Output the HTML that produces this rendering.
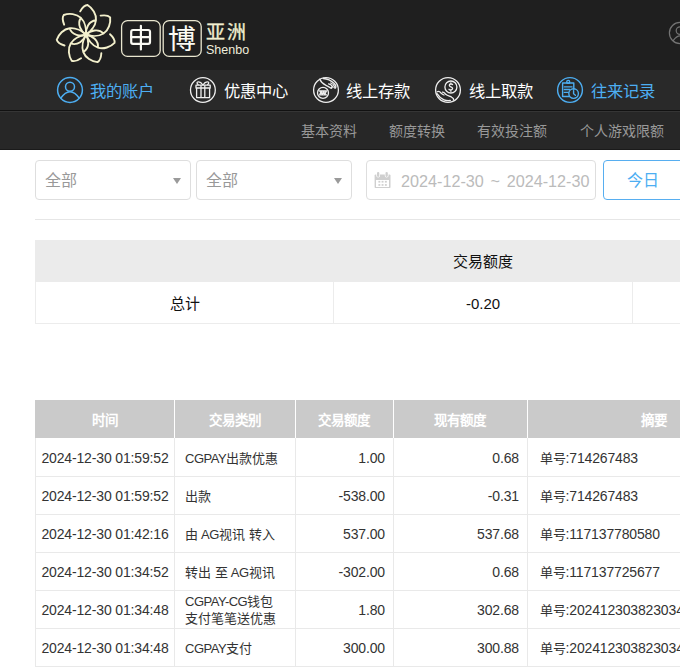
<!DOCTYPE html>
<html lang="zh-CN"><head><meta charset="utf-8"><style>
html,body{margin:0;padding:0;}
body{width:680px;height:672px;overflow:hidden;position:relative;background:#fff;font-family:"Liberation Sans", sans-serif;}
.abs{position:absolute;}
.nb{position:absolute;white-space:nowrap;}
.th{color:#fff;font-weight:bold;font-size:13.5px;padding-top:2px;box-sizing:border-box;text-align:center;white-space:nowrap;}
.ld{font-size:14px;letter-spacing:-0.15px;}
.tm .ld{letter-spacing:-0.15px;}
.lc{font-size:13px;letter-spacing:-0.5px;}
.td{font-size:13px;color:#333;display:flex;align-items:center;white-space:nowrap;line-height:17px;box-sizing:border-box;}
.tdc{justify-content:center;}
.tdl{justify-content:flex-start;padding-left:10px;}
.tdr{justify-content:flex-end;padding-right:8px;}
.c5{padding-left:11.5px;}
.nav{position:absolute;top:70.8px;height:40px;line-height:40px;font-size:16.3px;color:#fff;white-space:nowrap;}
.sub{position:absolute;top:113px;height:37px;line-height:37px;font-size:14px;color:#999;white-space:nowrap;}
.sel{position:absolute;top:160px;height:40px;box-sizing:border-box;border:1px solid #dedede;border-radius:4px;background:#fff;}
.seltxt{position:absolute;left:9px;top:1px;line-height:38px;font-size:16px;color:#999;white-space:nowrap;}
.tri{position:absolute;top:17px;width:0;height:0;border-left:4px solid transparent;border-right:4px solid transparent;border-top:6px solid #9a9a9a;}
</style></head><body>
<!-- header -->
<div class="abs" style="left:0;top:0;width:680px;height:70px;background:#1f1f1f"></div>
<svg class="abs" style="left:0;top:0" width="260" height="70"><g fill="none" stroke="#f3f0cc" stroke-width="1.9" stroke-linecap="round"><path d="M 80.21,11.37 C 82.42,7.48 85.55,5.14 87.55,5.04 C 92.41,8.00 96.59,14.23 95.97,20.20 C 95.46,26.18 90.15,31.91 86.00,34.70 M 86.00,34.70 C 85.32,28.66 88.73,20.82 95.97,20.20"/><path d="M 100.64,15.63 C 105.05,14.93 108.83,15.91 110.16,17.42 C 110.87,23.06 108.61,30.21 103.55,33.46 C 98.56,36.79 90.77,36.21 86.00,34.70 M 86.00,34.70 C 90.30,30.40 98.55,28.18 103.55,33.46"/><path d="M 110.04,34.25 C 113.34,37.27 114.92,40.84 114.57,42.82 C 110.61,46.89 103.61,49.58 97.92,47.65 C 92.20,45.82 87.79,39.37 86.00,34.70 M 86.00,34.70 C 92.04,35.38 98.92,40.45 97.92,47.65"/><path d="M 101.34,53.21 C 101.04,57.68 99.24,61.14 97.47,62.10 C 91.81,61.54 85.35,57.74 83.31,52.09 C 81.17,46.48 83.47,39.01 86.00,34.70 M 86.00,34.70 C 89.24,39.85 89.56,48.39 83.31,52.09"/><path d="M 81.09,58.23 C 77.41,60.78 73.58,61.53 71.73,60.75 C 68.64,55.98 67.58,48.55 70.72,43.44 C 73.78,38.27 81.05,35.41 86.00,34.70 M 86.00,34.70 C 83.99,40.44 77.52,46.02 70.72,43.44"/><path d="M 64.54,45.53 C 60.25,44.25 57.28,41.72 56.74,39.78 C 58.54,34.40 63.68,28.94 69.65,28.20 C 75.59,27.37 82.36,31.27 86.00,34.70 M 86.00,34.70 C 80.26,36.71 71.86,35.13 69.65,28.20"/><path d="M 64.15,24.68 C 62.48,20.52 62.60,16.62 63.78,14.99 C 69.12,13.04 76.59,13.66 80.88,17.86 C 85.24,21.99 86.41,29.72 86.00,34.70 M 86.00,34.70 C 80.85,31.47 76.85,23.91 80.88,17.86"/></g>
<rect x="121.6" y="20.6" width="38.6" height="35.8" rx="6" stroke="#e9e6cf" stroke-width="1.3" fill="none"/>
<rect x="163.2" y="20.6" width="38" height="35.8" rx="6" stroke="#e9e6cf" stroke-width="1.3" fill="none"/>
<g fill="none" stroke="#fbfbf4" stroke-width="2.2" stroke-linecap="round"><rect x="131.2" y="30" width="18.8" height="13.8" rx="1.8"/><path d="M131.2 37.1 H150 M140.9 25.8 V49.4"/></g>
</svg>
<div class="nb" style="left:168px;top:19.5px;font-size:27.8px;line-height:40px;color:#fbfbf4">博</div>
<div class="nb" style="left:205.5px;top:17.5px;font-size:19px;line-height:30px;color:#f1eecf;letter-spacing:2px;-webkit-text-stroke:0.3px #f1eecf">亚洲</div>
<div class="nb" style="left:206px;top:40.5px;font-size:12.5px;line-height:18px;color:#efeddc">Shenbo</div>
<svg class="abs" style="left:660px;top:14px" width="40" height="40"><g fill="none" stroke="#747474" stroke-width="1.2"><circle cx="20" cy="19" r="10.6"/><circle cx="20" cy="16.6" r="3.8"/><path d="M13 26.8 Q20 17 27 26.8"/></g></svg>
<!-- nav -->
<div class="abs" style="left:0;top:70px;width:680px;height:40px;background:#292929"></div>
<div class="abs" style="left:0;top:110px;width:680px;height:1px;background:#111"></div>
<div class="abs" style="left:0;top:111px;width:680px;height:1px;background:#353535"></div>
<svg class="abs" style="left:50px;top:70px" width="40" height="40"><g fill="none" stroke="#4daef2" stroke-width="1.5"><circle cx="20" cy="20" r="12.4"/><circle cx="20" cy="16.7" r="4.5"/><path d="M10.5 28.5 Q20 15 29.5 28.5"/></g></svg>
<div class="nav" style="left:90px;color:#4daef2">我的账户</div>
<svg class="abs" style="left:185px;top:70px" width="40" height="40"><g fill="none" stroke="#eee" stroke-width="1.3" stroke-linejoin="round"><circle cx="17.9" cy="20" r="12.4"/><rect x="11" y="15.2" width="14.2" height="2.8"/><path d="M11.6 18 V27.6 H24.6 V18"/><path d="M16 15.2 V27.6 M19.8 15.2 V27.6"/><path d="M17.9 15 C16.5 12.8 14 11.5 12.5 12 C11.5 12.6 12.2 14 13.5 15 M17.9 15 C19.3 12.8 21.8 11.5 23.3 12 C24.3 12.6 23.6 14 22.3 15"/></g></svg>
<div class="nav" style="left:224px">优惠中心</div>
<svg class="abs" style="left:306px;top:70px" width="40" height="40"><g fill="none" stroke="#eee" stroke-width="1.3" stroke-linecap="round" stroke-linejoin="round"><circle cx="20" cy="20" r="12.4"/><circle cx="17" cy="22.9" r="5.5"/><path d="M13.4 21 H20.6 M13.4 24.8 H20.6 M13.8 24.6 L15 21.2 L16.3 24.6 L17.6 21.2 L18.9 24.6 L20.2 21.2"/><path d="M13.8 9.2 C15 12 17 14 20 15.3 C22 16.2 23.5 17 25 18.2 C25.6 18.6 26.2 18 25.5 17.3"/><path d="M17.3 8.5 C21 8.8 25 10.5 28 13.2 C29.6 14.8 30.3 16.5 29.6 17.8 C29.2 18.4 28.5 18 28 17.4"/><path d="M22.6 13.8 C24.3 14 26 15.3 26.8 17.2 M24.8 13 C26.5 13.5 27.8 14.8 28.4 16.5"/></g></svg>
<div class="nav" style="left:346px">线上存款</div>
<svg class="abs" style="left:428px;top:70px" width="40" height="40"><g fill="none" stroke="#eee" stroke-width="1.3" stroke-linecap="round" stroke-linejoin="round"><circle cx="20" cy="20" r="12.4"/><circle cx="22.9" cy="17" r="6"/><path d="M24.6 14.6 C24 13.8 21.3 13.6 21.3 15.3 C21.3 17 24.6 16.6 24.6 18.6 C24.6 20.2 21.8 20.3 21 19.3 M22.9 12.8 V13.8 M22.9 20.4 V21.3"/><path d="M9.2 21.8 C10.5 21 12 21.8 13 23 C14 24 14.8 24.6 16 25"/><path d="M14.5 22.2 C15.8 22 17 23.5 18 24.6 C19.5 25.8 22 26.3 23.8 27.3 C25.2 28 25.8 29 25.6 29.8"/><path d="M9 23.6 C10.5 26 13 28.5 16 29.8 C18.2 30.7 20.6 30.8 22.3 30.5"/></g></svg>
<div class="nav" style="left:469px">线上取款</div>
<svg class="abs" style="left:550px;top:70px" width="40" height="40"><g fill="none" stroke="#4daef2" stroke-width="1.4" stroke-linecap="round" stroke-linejoin="round"><circle cx="20" cy="20" r="12.4"/><path d="M19.3 26.5 H12.6 V13 H23.8 V19.3"/><circle cx="18.2" cy="11.9" r="1.5"/><path d="M14.3 16.9 H22 M14.3 19.5 H19.6 M14.3 22.4 H18.2"/><circle cx="23.6" cy="23.6" r="4.8"/><path d="M23.6 20.6 V23.8 L25.4 25.2"/></g></svg>
<div class="nav" style="left:591px;color:#4daef2">往来记录</div>
<!-- subnav -->
<div class="abs" style="left:0;top:112px;width:680px;height:37px;background:#272727"></div>
<div class="abs" style="left:0;top:149px;width:680px;height:1px;background:#1a1a1a"></div>
<div class="sub" style="left:301px">基本资料</div>
<div class="sub" style="left:389px">额度转换</div>
<div class="sub" style="left:477px">有效投注额</div>
<div class="sub" style="left:580px">个人游戏限额</div>
<!-- filters -->
<div class="sel" style="left:35px;width:156px"><span class="seltxt">全部</span><div class="tri" style="left:137px"></div></div>
<div class="sel" style="left:196px;width:156px"><span class="seltxt">全部</span><div class="tri" style="left:137px"></div></div>
<div class="sel" style="left:366px;width:230px">
<svg class="abs" style="left:7px;top:11px" width="18" height="18"><rect x="0.6" y="2.4" width="15.9" height="13.7" rx="1.2" fill="#cfcfcf"/><rect x="2" y="8" width="13" height="7" fill="#fff"/><g fill="#cfcfcf"><rect x="4.4" y="8.9" width="1.9" height="1.7"/><rect x="7.6" y="8.9" width="1.9" height="1.7"/><rect x="10.9" y="8.9" width="1.9" height="1.7"/><rect x="4.4" y="12.1" width="1.9" height="1.7"/><rect x="7.6" y="12.1" width="1.9" height="1.7"/><rect x="10.9" y="12.1" width="1.9" height="1.7"/></g><g fill="#fff"><rect x="2.3" y="-1" width="3.7" height="6.6" rx="1.8"/><rect x="10.8" y="-1" width="3.7" height="6.6" rx="1.8"/></g><g fill="#cfcfcf"><rect x="3" y="0" width="2.3" height="4.9" rx="1.1"/><rect x="11.5" y="0" width="2.3" height="4.9" rx="1.1"/></g></svg>
<span class="seltxt" style="left:34px;top:1.4px;font-size:16.2px;color:#bbb;word-spacing:2.2px">2024-12-30 ~ 2024-12-30</span></div>
<div class="sel" style="left:603px;width:110px;border-color:#57aef0"><span class="seltxt" style="left:23px;font-size:16px;color:#4daef2">今日</span></div>
<div class="abs" style="left:35px;top:219px;width:645px;height:1px;background:#e6e6e6"></div>
<!-- summary -->
<div class="abs" style="left:35px;top:240px;width:700px;height:42px;background:#ebebeb"></div>
<div class="nb" style="left:333px;top:241px;width:299px;line-height:42px;text-align:center;font-size:15px;color:#111">交易额度</div>
<div class="abs" style="left:35px;top:282px;width:700px;height:42px;box-sizing:border-box;border-left:1px solid #ececec;border-bottom:1px solid #ececec"></div>
<div class="abs" style="left:333px;top:282px;width:1px;height:42px;background:#ececec"></div>
<div class="abs" style="left:632px;top:282px;width:1px;height:42px;background:#ececec"></div>
<div class="nb" style="left:36px;top:283px;width:297px;line-height:42px;text-align:center;font-size:15px;color:#111">总计</div>
<div class="nb" style="left:334px;top:282.5px;width:298px;line-height:42px;text-align:center;font-size:15px;color:#111">-0.20</div>
<!-- main table -->
<div class="abs" style="left:35px;top:400px;width:700px;height:38px;background:#cacaca"></div>
<div class="abs th" style="left:35px;top:400px;width:139px;height:38px;line-height:38px">时间</div>
<div class="abs" style="left:174px;top:400px;width:1px;height:38px;background:#fff"></div>
<div class="abs th" style="left:174px;top:400px;width:121px;height:38px;line-height:38px">交易类别</div>
<div class="abs" style="left:295px;top:400px;width:1px;height:38px;background:#fff"></div>
<div class="abs th" style="left:295px;top:400px;width:98px;height:38px;line-height:38px">交易额度</div>
<div class="abs" style="left:393px;top:400px;width:1px;height:38px;background:#fff"></div>
<div class="abs th" style="left:393px;top:400px;width:134px;height:38px;line-height:38px">现有额度</div>
<div class="abs" style="left:527px;top:400px;width:1px;height:38px;background:#fff"></div>
<div class="abs th" style="left:527px;top:400px;width:254px;height:38px;line-height:38px">摘要</div>
<div class="abs" style="left:35px;top:476px;width:700px;height:1px;background:#e9e9e9"></div>
<div class="abs" style="left:35px;top:438px;width:1px;height:38px;background:#e9e9e9"></div>
<div class="abs td tdc tm" style="left:36px;top:439px;width:138px;height:38px"><div><span class="ld">2024-12-30 01:59:52</span></div></div>
<div class="abs" style="left:174px;top:438px;width:1px;height:38px;background:#e9e9e9"></div>
<div class="abs td tdl" style="left:175px;top:439px;width:120px;height:38px"><div><span class="lc">CGPAY</span>出款优惠</div></div>
<div class="abs" style="left:295px;top:438px;width:1px;height:38px;background:#e9e9e9"></div>
<div class="abs td tdr" style="left:296px;top:439px;width:97px;height:38px"><div><span class="ld">1.00</span></div></div>
<div class="abs" style="left:393px;top:438px;width:1px;height:38px;background:#e9e9e9"></div>
<div class="abs td tdr" style="left:394px;top:439px;width:133px;height:38px"><div><span class="ld">0.68</span></div></div>
<div class="abs" style="left:527px;top:438px;width:1px;height:38px;background:#e9e9e9"></div>
<div class="abs td tdl c5" style="left:528px;top:439px;width:253px;height:38px"><div>单号<span class="ld">:714267483</span></div></div>
<div class="abs" style="left:35px;top:514px;width:700px;height:1px;background:#e9e9e9"></div>
<div class="abs" style="left:35px;top:476px;width:1px;height:38px;background:#e9e9e9"></div>
<div class="abs td tdc tm" style="left:36px;top:477px;width:138px;height:38px"><div><span class="ld">2024-12-30 01:59:52</span></div></div>
<div class="abs" style="left:174px;top:476px;width:1px;height:38px;background:#e9e9e9"></div>
<div class="abs td tdl" style="left:175px;top:477px;width:120px;height:38px"><div>出款</div></div>
<div class="abs" style="left:295px;top:476px;width:1px;height:38px;background:#e9e9e9"></div>
<div class="abs td tdr" style="left:296px;top:477px;width:97px;height:38px"><div><span class="ld">-538.00</span></div></div>
<div class="abs" style="left:393px;top:476px;width:1px;height:38px;background:#e9e9e9"></div>
<div class="abs td tdr" style="left:394px;top:477px;width:133px;height:38px"><div><span class="ld">-0.31</span></div></div>
<div class="abs" style="left:527px;top:476px;width:1px;height:38px;background:#e9e9e9"></div>
<div class="abs td tdl c5" style="left:528px;top:477px;width:253px;height:38px"><div>单号<span class="ld">:714267483</span></div></div>
<div class="abs" style="left:35px;top:552px;width:700px;height:1px;background:#e9e9e9"></div>
<div class="abs" style="left:35px;top:514px;width:1px;height:38px;background:#e9e9e9"></div>
<div class="abs td tdc tm" style="left:36px;top:515px;width:138px;height:38px"><div><span class="ld">2024-12-30 01:42:16</span></div></div>
<div class="abs" style="left:174px;top:514px;width:1px;height:38px;background:#e9e9e9"></div>
<div class="abs td tdl" style="left:175px;top:515px;width:120px;height:38px"><div>由<span class="lc"> AG</span>视讯<span class="ld"> </span>转入</div></div>
<div class="abs" style="left:295px;top:514px;width:1px;height:38px;background:#e9e9e9"></div>
<div class="abs td tdr" style="left:296px;top:515px;width:97px;height:38px"><div><span class="ld">537.00</span></div></div>
<div class="abs" style="left:393px;top:514px;width:1px;height:38px;background:#e9e9e9"></div>
<div class="abs td tdr" style="left:394px;top:515px;width:133px;height:38px"><div><span class="ld">537.68</span></div></div>
<div class="abs" style="left:527px;top:514px;width:1px;height:38px;background:#e9e9e9"></div>
<div class="abs td tdl c5" style="left:528px;top:515px;width:253px;height:38px"><div>单号<span class="ld">:117137780580</span></div></div>
<div class="abs" style="left:35px;top:590px;width:700px;height:1px;background:#e9e9e9"></div>
<div class="abs" style="left:35px;top:552px;width:1px;height:38px;background:#e9e9e9"></div>
<div class="abs td tdc tm" style="left:36px;top:553px;width:138px;height:38px"><div><span class="ld">2024-12-30 01:34:52</span></div></div>
<div class="abs" style="left:174px;top:552px;width:1px;height:38px;background:#e9e9e9"></div>
<div class="abs td tdl" style="left:175px;top:553px;width:120px;height:38px"><div>转出<span class="ld"> </span>至<span class="lc"> AG</span>视讯</div></div>
<div class="abs" style="left:295px;top:552px;width:1px;height:38px;background:#e9e9e9"></div>
<div class="abs td tdr" style="left:296px;top:553px;width:97px;height:38px"><div><span class="ld">-302.00</span></div></div>
<div class="abs" style="left:393px;top:552px;width:1px;height:38px;background:#e9e9e9"></div>
<div class="abs td tdr" style="left:394px;top:553px;width:133px;height:38px"><div><span class="ld">0.68</span></div></div>
<div class="abs" style="left:527px;top:552px;width:1px;height:38px;background:#e9e9e9"></div>
<div class="abs td tdl c5" style="left:528px;top:553px;width:253px;height:38px"><div>单号<span class="ld">:117137725677</span></div></div>
<div class="abs" style="left:35px;top:628px;width:700px;height:1px;background:#e9e9e9"></div>
<div class="abs" style="left:35px;top:590px;width:1px;height:38px;background:#e9e9e9"></div>
<div class="abs td tdc tm" style="left:36px;top:591px;width:138px;height:38px"><div><span class="ld">2024-12-30 01:34:48</span></div></div>
<div class="abs" style="left:174px;top:590px;width:1px;height:38px;background:#e9e9e9"></div>
<div class="abs td tdl" style="left:175px;top:591px;width:120px;height:38px"><div><span class="lc">CGPAY-CG</span>钱包<br>支付笔笔送优惠</div></div>
<div class="abs" style="left:295px;top:590px;width:1px;height:38px;background:#e9e9e9"></div>
<div class="abs td tdr" style="left:296px;top:591px;width:97px;height:38px"><div><span class="ld">1.80</span></div></div>
<div class="abs" style="left:393px;top:590px;width:1px;height:38px;background:#e9e9e9"></div>
<div class="abs td tdr" style="left:394px;top:591px;width:133px;height:38px"><div><span class="ld">302.68</span></div></div>
<div class="abs" style="left:527px;top:590px;width:1px;height:38px;background:#e9e9e9"></div>
<div class="abs td tdl c5" style="left:528px;top:591px;width:253px;height:38px"><div>单号<span class="ld">:20241230382303416</span></div></div>
<div class="abs" style="left:35px;top:666px;width:700px;height:1px;background:#e9e9e9"></div>
<div class="abs" style="left:35px;top:628px;width:1px;height:38px;background:#e9e9e9"></div>
<div class="abs td tdc tm" style="left:36px;top:629px;width:138px;height:38px"><div><span class="ld">2024-12-30 01:34:48</span></div></div>
<div class="abs" style="left:174px;top:628px;width:1px;height:38px;background:#e9e9e9"></div>
<div class="abs td tdl" style="left:175px;top:629px;width:120px;height:38px"><div><span class="lc">CGPAY</span>支付</div></div>
<div class="abs" style="left:295px;top:628px;width:1px;height:38px;background:#e9e9e9"></div>
<div class="abs td tdr" style="left:296px;top:629px;width:97px;height:38px"><div><span class="ld">300.00</span></div></div>
<div class="abs" style="left:393px;top:628px;width:1px;height:38px;background:#e9e9e9"></div>
<div class="abs td tdr" style="left:394px;top:629px;width:133px;height:38px"><div><span class="ld">300.88</span></div></div>
<div class="abs" style="left:527px;top:628px;width:1px;height:38px;background:#e9e9e9"></div>
<div class="abs td tdl c5" style="left:528px;top:629px;width:253px;height:38px"><div>单号<span class="ld">:20241230382303416</span></div></div>
</body></html>
